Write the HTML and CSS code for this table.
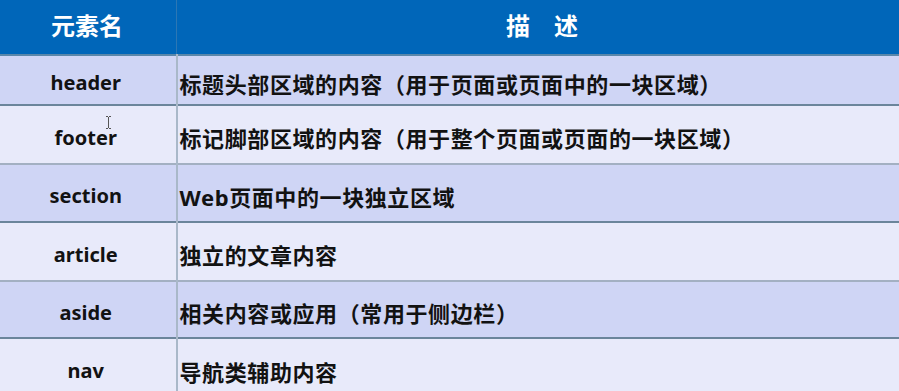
FILE: index.html
```html
<!DOCTYPE html>
<html lang="zh">
<head>
<meta charset="utf-8">
<title>HTML5 结构元素</title>
<link rel="stylesheet" href="styles.css">
</head>
<body>
<div class="page">
<table class="tbl">
  <thead>
    <tr class="head">
      <th class="c1">元素名</th>
      <th class="c2">描　述</th>
    </tr>
  </thead>
  <tbody>
    <tr class="dark r1"><td class="c1">header</td><td class="c2">标题头部区域的内容（用于页面或页面中的一块区域）</td></tr>
    <tr class="light"><td class="c1">footer</td><td class="c2">标记脚部区域的内容（用于整个页面或页面的一块区域）</td></tr>
    <tr class="dark"><td class="c1">section</td><td class="c2">Web页面中的一块独立区域</td></tr>
    <tr class="light"><td class="c1">article</td><td class="c2">独立的文章内容</td></tr>
    <tr class="dark r5"><td class="c1">aside</td><td class="c2">相关内容或应用（常用于侧边栏）</td></tr>
    <tr class="light last"><td class="c1">nav</td><td class="c2">导航类辅助内容</td></tr>
  </tbody>
</table>
<svg class="cursor" width="7" height="13" viewBox="0 0 7 13"><path d="M1 0.5h2M4 0.5h2M3.5 1v11M1 12.5h2M4 12.5h2" stroke="#555" stroke-width="1" fill="none"/></svg>
</div>
</body>
</html>
```

FILE: styles.css
```css
html, body {
  margin: 0;
  padding: 0;
  background: #e8eafa;
}
.page {
  position: relative;
  width: 899px;
  height: 391px;
  overflow: hidden;
}
.tbl {
  width: 899px;
  border-collapse: collapse;
  table-layout: fixed;
  font-family: "Noto Sans", "Noto Sans CJK SC", sans-serif;
  font-weight: 700;
  color: #121212;
}
.tbl th, .tbl td {
  padding: 0;
  vertical-align: middle;
}
.c1 {
  width: 174px;
  text-align: center;
  font-size: 20px;
  border-right: 2px solid #a9b8c9;
}
.c2 {
  text-align: left;
  padding-left: 2px !important;
  font-size: 22px;
  letter-spacing: 0.6px;
}
.head {
  height: 55px;
  background: #0066b9;
  color: #ffffff;
  border-bottom: 2px solid #5a87aa;
}
.head th {
  font-family: "Noto Sans CJK SC", sans-serif;
  font-size: 24px;
  font-weight: 700;
  padding-bottom: 5px;
}
.head .c1 {
  border-right: 1px solid #2c77b4;
  padding-right: 2px;
}
.head .c2 {
  text-align: center;
  letter-spacing: 0;
  padding-left: 8px !important;
}
.dark {
  background: #cfd5f5;
  border-bottom: 2px solid #6b859b;
  height: 58px;
}
.light {
  background: #e8eafa;
  border-bottom: 2px solid #a3b0c2;
  height: 59px;
}
.r1 { height: 50px; }
.r5 { height: 57px; }
.last { border-bottom: none; }
.tbl tbody td {
  padding-top: 5px;
}
.tbl tbody .c1 {
  padding-right: 4px;
}
.cursor {
  position: absolute;
  left: 105px;
  top: 116px;
}
```
